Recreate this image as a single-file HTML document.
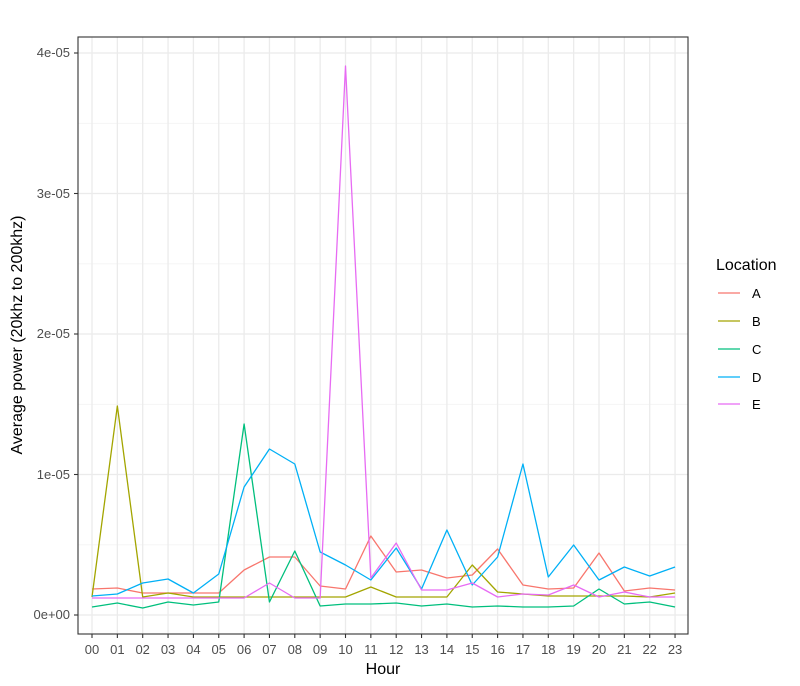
<!DOCTYPE html>
<html><head><style>body{margin:0;background:#fff}svg{display:block}text{font-family:"Liberation Sans",Arial,sans-serif}</style></head><body>
<svg width="800" height="686" xmlns="http://www.w3.org/2000/svg">
<rect width="800" height="686" fill="#fff"/>
<g stroke="#f4f4f4" stroke-width="0.8">
<line x1="78" x2="688" y1="544.8" y2="544.8"/><line x1="78" x2="688" y1="404.3" y2="404.3"/><line x1="78" x2="688" y1="263.8" y2="263.8"/><line x1="78" x2="688" y1="123.3" y2="123.3"/>
</g>
<g stroke="#ebebeb" stroke-width="1.3">
<line x1="78" x2="688" y1="615" y2="615"/><line x1="78" x2="688" y1="474.5" y2="474.5"/><line x1="78" x2="688" y1="334" y2="334"/><line x1="78" x2="688" y1="193.5" y2="193.5"/><line x1="78" x2="688" y1="53" y2="53"/>
<line x1="92" x2="92" y1="37" y2="634"/><line x1="117.35" x2="117.35" y1="37" y2="634"/><line x1="142.7" x2="142.7" y1="37" y2="634"/><line x1="168.05" x2="168.05" y1="37" y2="634"/><line x1="193.4" x2="193.4" y1="37" y2="634"/><line x1="218.75" x2="218.75" y1="37" y2="634"/><line x1="244.1" x2="244.1" y1="37" y2="634"/><line x1="269.45" x2="269.45" y1="37" y2="634"/><line x1="294.8" x2="294.8" y1="37" y2="634"/><line x1="320.15" x2="320.15" y1="37" y2="634"/><line x1="345.5" x2="345.5" y1="37" y2="634"/><line x1="370.85" x2="370.85" y1="37" y2="634"/><line x1="396.2" x2="396.2" y1="37" y2="634"/><line x1="421.55" x2="421.55" y1="37" y2="634"/><line x1="446.9" x2="446.9" y1="37" y2="634"/><line x1="472.25" x2="472.25" y1="37" y2="634"/><line x1="497.6" x2="497.6" y1="37" y2="634"/><line x1="522.95" x2="522.95" y1="37" y2="634"/><line x1="548.3" x2="548.3" y1="37" y2="634"/><line x1="573.65" x2="573.65" y1="37" y2="634"/><line x1="599" x2="599" y1="37" y2="634"/><line x1="624.35" x2="624.35" y1="37" y2="634"/><line x1="649.7" x2="649.7" y1="37" y2="634"/><line x1="675.05" x2="675.05" y1="37" y2="634"/>
</g>
<g fill="none" stroke-width="1.3" stroke-linejoin="round">
<polyline stroke="#F8766D" points="92,589 117.35,588 142.7,593 168.05,593 193.4,593 218.75,593 244.1,570 269.45,557 294.8,557 320.15,586 345.5,589 370.85,536 396.2,572 421.55,570 446.9,578 472.25,575 497.6,549 522.95,585 548.3,589 573.65,588 599,553 624.35,591 649.7,588 675.05,590"/>
<polyline stroke="#A3A500" points="92,597 117.35,406 142.7,597 168.05,593 193.4,597 218.75,597 244.1,597 269.45,597 294.8,597 320.15,597 345.5,597 370.85,587 396.2,597 421.55,597 446.9,597 472.25,565 497.6,592 522.95,594 548.3,596 573.65,596 599,596 624.35,596 649.7,597 675.05,593"/>
<polyline stroke="#00BF7D" points="92,607 117.35,603 142.7,608 168.05,602 193.4,605 218.75,602 244.1,424 269.45,602 294.8,551 320.15,606 345.5,604 370.85,604 396.2,603 421.55,606 446.9,604 472.25,607 497.6,606 522.95,607 548.3,607 573.65,606 599,589 624.35,604 649.7,602 675.05,607"/>
<polyline stroke="#00B0F6" points="92,596 117.35,594 142.7,583 168.05,579 193.4,593 218.75,574 244.1,487 269.45,449 294.8,464 320.15,552 345.5,565 370.85,580 396.2,548 421.55,589 446.9,530 472.25,585 497.6,557 522.95,464 548.3,577 573.65,545 599,580 624.35,567 649.7,576 675.05,567"/>
<polyline stroke="#E76BF3" points="92,598 117.35,598 142.7,598 168.05,598 193.4,598 218.75,598 244.1,598 269.45,583 294.8,598 320.15,598 345.5,66 370.85,578 396.2,543 421.55,590 446.9,590 472.25,583 497.6,597 522.95,594 548.3,595 573.65,585 599,597 624.35,592 649.7,597 675.05,597"/>
</g>
<rect x="78" y="37" width="610" height="597" fill="none" stroke="#333" stroke-width="1.1"/>
<g stroke="#333" stroke-width="1.1">
<line x1="74" x2="78" y1="615" y2="615"/><line x1="74" x2="78" y1="474.5" y2="474.5"/><line x1="74" x2="78" y1="334" y2="334"/><line x1="74" x2="78" y1="193.5" y2="193.5"/><line x1="74" x2="78" y1="53" y2="53"/>
</g>
<g font-size="13" fill="#4d4d4d" text-anchor="end">
<text x="70" y="619">0e+00</text><text x="70" y="479">1e-05</text><text x="70" y="338">2e-05</text><text x="70" y="198">3e-05</text><text x="70" y="57">4e-05</text>
</g>
<g stroke="#333" stroke-width="1.1">
<line x1="92" x2="92" y1="634" y2="638"/><line x1="117.35" x2="117.35" y1="634" y2="638"/><line x1="142.7" x2="142.7" y1="634" y2="638"/><line x1="168.05" x2="168.05" y1="634" y2="638"/><line x1="193.4" x2="193.4" y1="634" y2="638"/><line x1="218.75" x2="218.75" y1="634" y2="638"/><line x1="244.1" x2="244.1" y1="634" y2="638"/><line x1="269.45" x2="269.45" y1="634" y2="638"/><line x1="294.8" x2="294.8" y1="634" y2="638"/><line x1="320.15" x2="320.15" y1="634" y2="638"/><line x1="345.5" x2="345.5" y1="634" y2="638"/><line x1="370.85" x2="370.85" y1="634" y2="638"/><line x1="396.2" x2="396.2" y1="634" y2="638"/><line x1="421.55" x2="421.55" y1="634" y2="638"/><line x1="446.9" x2="446.9" y1="634" y2="638"/><line x1="472.25" x2="472.25" y1="634" y2="638"/><line x1="497.6" x2="497.6" y1="634" y2="638"/><line x1="522.95" x2="522.95" y1="634" y2="638"/><line x1="548.3" x2="548.3" y1="634" y2="638"/><line x1="573.65" x2="573.65" y1="634" y2="638"/><line x1="599" x2="599" y1="634" y2="638"/><line x1="624.35" x2="624.35" y1="634" y2="638"/><line x1="649.7" x2="649.7" y1="634" y2="638"/><line x1="675.05" x2="675.05" y1="634" y2="638"/>
</g>
<g font-size="13" fill="#4d4d4d" text-anchor="middle">
<text x="92" y="654">00</text><text x="117.35" y="654">01</text><text x="142.7" y="654">02</text><text x="168.05" y="654">03</text><text x="193.4" y="654">04</text><text x="218.75" y="654">05</text><text x="244.1" y="654">06</text><text x="269.45" y="654">07</text><text x="294.8" y="654">08</text><text x="320.15" y="654">09</text><text x="345.5" y="654">10</text><text x="370.85" y="654">11</text><text x="396.2" y="654">12</text><text x="421.55" y="654">13</text><text x="446.9" y="654">14</text><text x="472.25" y="654">15</text><text x="497.6" y="654">16</text><text x="522.95" y="654">17</text><text x="548.3" y="654">18</text><text x="573.65" y="654">19</text><text x="599" y="654">20</text><text x="624.35" y="654">21</text><text x="649.7" y="654">22</text><text x="675.05" y="654">23</text>
</g>
<text x="383" y="674" font-size="16" text-anchor="middle" fill="#000">Hour</text>
<text transform="translate(22,335) rotate(-90)" font-size="16" text-anchor="middle" fill="#000">Average power (20khz to 200khz)</text>
<text x="716" y="270" font-size="16" fill="#000">Location</text>
<g stroke-width="1.3">
<line x1="718" x2="740" y1="293" y2="293" stroke="#F8766D"/>
<line x1="718" x2="740" y1="321" y2="321" stroke="#A3A500"/>
<line x1="718" x2="740" y1="349" y2="349" stroke="#00BF7D"/>
<line x1="718" x2="740" y1="377" y2="377" stroke="#00B0F6"/>
<line x1="718" x2="740" y1="404" y2="404" stroke="#E76BF3"/>
</g>
<g font-size="13" fill="#000">
<text x="752" y="298">A</text><text x="752" y="326">B</text><text x="752" y="354">C</text><text x="752" y="382">D</text><text x="752" y="409">E</text>
</g>
</svg>
</body></html>
